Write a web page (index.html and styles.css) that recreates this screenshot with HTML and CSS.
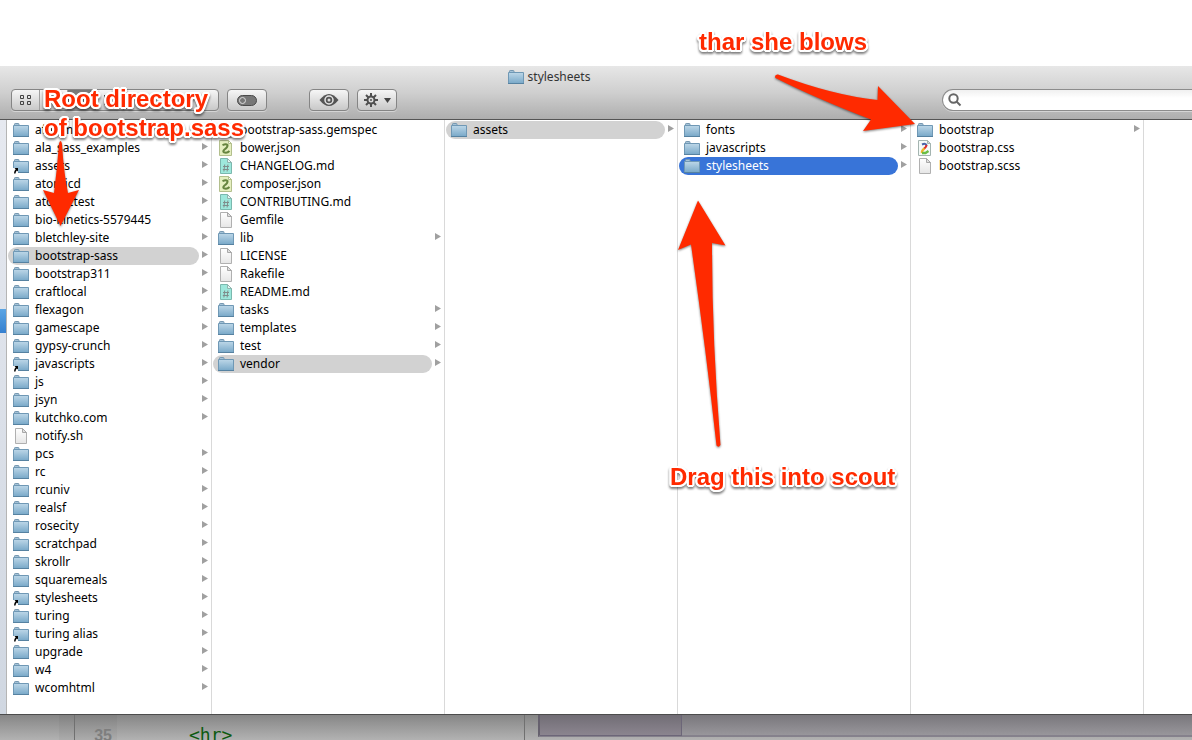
FILE: index.html
```
<!DOCTYPE html>
<html lang="en">
<head>
<meta charset="utf-8">
<title>stylesheets</title>
<link rel="stylesheet" href="styles.css">
</head>
<body>
<svg class="defs" aria-hidden="true">
  <defs>
    <linearGradient id="gFolder" x1="0" y1="0" x2="0" y2="1"><stop offset="0" stop-color="#bdd7e8"/><stop offset="1" stop-color="#78a8c8"/></linearGradient>
    <linearGradient id="gPage" x1="0" y1="0" x2="0" y2="1"><stop offset="0" stop-color="#fff"/><stop offset="1" stop-color="#e6e6e6"/></linearGradient>
    <symbol id="folder" viewBox="0 0 16 16">
      <path d="M1.500 3V2.200Q1.500 1.500 2.200 1.500H5.300Q6 1.500 6 2.200V3.500H1.500Z" fill="#a5c3d8" stroke="#7698b1"/>
      <path d="M.5 3.500H15.500V14.500H.5Z" fill="url(#gFolder)" stroke="#6f98b5"/>
      <path d="M0 14.500H16" stroke="#5682a1"/>
    </symbol>
    <symbol id="alias" viewBox="0 0 16 16">
      <use href="#folder"/>
      <path d="M0 10H5V16H0Z" fill="#fff"/>
      <path d="M1.500 10H5V13.500L3.900 12.400Q2.700 13.400 2.500 15.500H1Q1.100 12.800 2.700 11.200Z" fill="#000"/>
    </symbol>
    <symbol id="page" viewBox="0 0 16 16">
      <path d="M2.500.5H9.500L13.500 4.500V15.500H2.500Z" fill="url(#gPage)" stroke="#b0b0b0"/>
      <path d="M9.500.5V4.500H13.500Z" fill="#e0e0e0" stroke="#a8a8a8"/>
    </symbol>
    <symbol id="md" viewBox="0 0 16 16">
      <path d="M2.500.5H9.500L13.500 4.500V15.500H2.500Z" fill="#9ee8dc" stroke="#7bb8ae"/>
      <path d="M9.500.5V4.500H13.500Z" fill="#e4f6f3" stroke="#8fb5af"/>
      <path d="M6.700 6.500L5.900 13.500M9.900 6.500L9.100 13.500M5 8.500H11M4.800 11.500H10.800" stroke="#7f8d8b" fill="none"/>
    </symbol>
    <symbol id="json" viewBox="0 0 16 16">
      <path d="M1.500.5H10.500L13.500 3.500V15.500H1.500Z" fill="#e5efc0" stroke="#b3bf8d"/>
      <path d="M10.500.5V3.500H13.500Z" fill="#fff" stroke="#b3bf8d"/>
      <path d="M4.500 5.200Q8 3.500 9.500 5Q10 7 6.500 9.500Q4.300 11.500 6 12.300Q9 13.500 11.500 11" fill="none" stroke="#66853f" stroke-width="2"/>
    </symbol>
    <symbol id="css" viewBox="0 0 16 16">
      <path d="M1.500.5H10.500L13.500 3.500V15.500H1.500Z" fill="#f4faf8" stroke="#a4b4b0"/>
      <path d="M10.500.5V3.500H13.500Z" fill="#dcdcdc" stroke="#a4b4b0"/>
      <path d="M5 4.500Q9 2.800 9.500 5.500" fill="none" stroke="#4a63a8" stroke-width="2"/>
      <path d="M9.500 5Q9.500 7 7 8.800" fill="none" stroke="#dc3030" stroke-width="2.200"/>
      <path d="M7.500 8.500Q4.500 10.500 5 13" fill="none" stroke="#efb52c" stroke-width="2.400"/>
      <path d="M5 13H8.500L11.500 11" fill="none" stroke="#6abd45" stroke-width="2.400"/>
    </symbol>
  </defs>
</svg>

<main class="desk">
  <section class="window">
    <header class="toolbar">
      <h1 class="title"><svg class="icon"><use href="#folder"/></svg>stylesheets</h1>
      <div class="tools">
        <div class="segments" role="group" aria-label="View">
          <button class="seg" aria-label="Icons"><svg width="12" height="11" fill="none" stroke="#444"><path d="M.5 .5H3.500V3.500H.5ZM7.500 .5H10.500V3.500H7.500ZM.5 6.500H3.500V9.500H.5ZM7.500 6.500H10.500V9.500H7.500Z"/></svg></button>
          <button class="seg" aria-label="List"><svg width="12" height="10" stroke="#444"><path d="M0 1.500H12M0 4.500H12M0 7.500H12"/></svg></button>
          <button class="seg active" aria-label="Columns"><svg width="12" height="10" stroke="#fff"><path d="M1.500 0V10M5.500 0V10M9.500 0V10"/></svg></button>
          <button class="seg" aria-label="Cover Flow"><svg width="14" height="10" stroke="#444"><path d="M1.500 0V10M3.500 0V10M10.500 0V10M12.500 0V10"/></svg></button>
          <button class="seg wide" aria-label="Arrange"></button>
        </div>
        <button class="tool" aria-label="Toggle"><svg width="20" height="11"><rect x=".5" y=".5" width="19" height="10" rx="5" fill="#777" stroke="#4b4b4b"/><circle cx="5.500" cy="5.500" r="3" fill="#777" stroke="#ddd"/></svg></button>
        <button class="tool look" aria-label="Quick Look"><svg width="20" height="14"><path d="M.5 7Q10-5 19.500 7Q10 19 .5 7Z" fill="#555"/><circle cx="10" cy="7" r="4" fill="#555" stroke="#e5e5e5" stroke-width="1.500"/><circle cx="10" cy="7" r="1.500" fill="#ddd"/></svg></button>
        <button class="tool" aria-label="Actions"><svg width="28" height="16"><path d="M8 1V15M1 8H15M3 3L13 13M13 3L3 13" stroke="#505050" stroke-width="2"/><circle cx="8" cy="8" r="3.500" fill="#ddd" stroke="#505050" stroke-width="2"/><circle cx="8" cy="8" r="1" fill="#505050"/><path d="M21 6H28L24.500 11Z" fill="#444"/></svg></button>
        <label class="search"><svg width="14" height="14" fill="none" stroke="#666" stroke-width="2"><circle cx="5.500" cy="5.500" r="4.200"/><path d="M8.500 8.500L12.500 12.500"/></svg><input type="search" aria-label="Search"></label>
      </div>
    </header>
    <div class="browser">
      <div class="sidebar"><div class="place"></div></div>
      <ul class="column">
        <li class="dir"><a href="#"><svg class="icon"><use href="#folder"/></svg>afterm</a></li>
        <li class="dir"><a href="#"><svg class="icon"><use href="#folder"/></svg>ala_sass_examples</a></li>
        <li class="dir"><a href="#"><svg class="icon"><use href="#alias"/></svg>assets</a></li>
        <li class="dir"><a href="#"><svg class="icon"><use href="#folder"/></svg>atomicd</a></li>
        <li class="dir"><a href="#"><svg class="icon"><use href="#folder"/></svg>atomictest</a></li>
        <li class="dir"><a href="#"><svg class="icon"><use href="#folder"/></svg>bio-kinetics-5579445</a></li>
        <li class="dir"><a href="#"><svg class="icon"><use href="#folder"/></svg>bletchley-site</a></li>
        <li class="dir"><a class="open" href="#"><svg class="icon"><use href="#folder"/></svg>bootstrap-sass</a></li>
        <li class="dir"><a href="#"><svg class="icon"><use href="#folder"/></svg>bootstrap311</a></li>
        <li class="dir"><a href="#"><svg class="icon"><use href="#folder"/></svg>craftlocal</a></li>
        <li class="dir"><a href="#"><svg class="icon"><use href="#folder"/></svg>flexagon</a></li>
        <li class="dir"><a href="#"><svg class="icon"><use href="#folder"/></svg>gamescape</a></li>
        <li class="dir"><a href="#"><svg class="icon"><use href="#folder"/></svg>gypsy-crunch</a></li>
        <li class="dir"><a href="#"><svg class="icon"><use href="#alias"/></svg>javascripts</a></li>
        <li class="dir"><a href="#"><svg class="icon"><use href="#folder"/></svg>js</a></li>
        <li class="dir"><a href="#"><svg class="icon"><use href="#folder"/></svg>jsyn</a></li>
        <li class="dir"><a href="#"><svg class="icon"><use href="#folder"/></svg>kutchko.com</a></li>
        <li><a href="#"><svg class="icon"><use href="#page"/></svg>notify.sh</a></li>
        <li class="dir"><a href="#"><svg class="icon"><use href="#folder"/></svg>pcs</a></li>
        <li class="dir"><a href="#"><svg class="icon"><use href="#folder"/></svg>rc</a></li>
        <li class="dir"><a href="#"><svg class="icon"><use href="#folder"/></svg>rcuniv</a></li>
        <li class="dir"><a href="#"><svg class="icon"><use href="#folder"/></svg>realsf</a></li>
        <li class="dir"><a href="#"><svg class="icon"><use href="#folder"/></svg>rosecity</a></li>
        <li class="dir"><a href="#"><svg class="icon"><use href="#folder"/></svg>scratchpad</a></li>
        <li class="dir"><a href="#"><svg class="icon"><use href="#folder"/></svg>skrollr</a></li>
        <li class="dir"><a href="#"><svg class="icon"><use href="#folder"/></svg>squaremeals</a></li>
        <li class="dir"><a href="#"><svg class="icon"><use href="#alias"/></svg>stylesheets</a></li>
        <li class="dir"><a href="#"><svg class="icon"><use href="#folder"/></svg>turing</a></li>
        <li class="dir"><a href="#"><svg class="icon"><use href="#alias"/></svg>turing alias</a></li>
        <li class="dir"><a href="#"><svg class="icon"><use href="#folder"/></svg>upgrade</a></li>
        <li class="dir"><a href="#"><svg class="icon"><use href="#folder"/></svg>w4</a></li>
        <li class="dir"><a href="#"><svg class="icon"><use href="#folder"/></svg>wcomhtml</a></li>
      </ul>
      <ul class="column">
        <li><a href="#"><svg class="icon"><use href="#page"/></svg>bootstrap-sass.gemspec</a></li>
        <li><a href="#"><svg class="icon"><use href="#json"/></svg>bower.json</a></li>
        <li><a href="#"><svg class="icon"><use href="#md"/></svg>CHANGELOG.md</a></li>
        <li><a href="#"><svg class="icon"><use href="#json"/></svg>composer.json</a></li>
        <li><a href="#"><svg class="icon"><use href="#md"/></svg>CONTRIBUTING.md</a></li>
        <li><a href="#"><svg class="icon"><use href="#page"/></svg>Gemfile</a></li>
        <li class="dir"><a href="#"><svg class="icon"><use href="#folder"/></svg>lib</a></li>
        <li><a href="#"><svg class="icon"><use href="#page"/></svg>LICENSE</a></li>
        <li><a href="#"><svg class="icon"><use href="#page"/></svg>Rakefile</a></li>
        <li><a href="#"><svg class="icon"><use href="#md"/></svg>README.md</a></li>
        <li class="dir"><a href="#"><svg class="icon"><use href="#folder"/></svg>tasks</a></li>
        <li class="dir"><a href="#"><svg class="icon"><use href="#folder"/></svg>templates</a></li>
        <li class="dir"><a href="#"><svg class="icon"><use href="#folder"/></svg>test</a></li>
        <li class="dir"><a class="open" href="#"><svg class="icon"><use href="#folder"/></svg>vendor</a></li>
      </ul>
      <ul class="column">
        <li class="dir"><a class="open" href="#"><svg class="icon"><use href="#folder"/></svg>assets</a></li>
      </ul>
      <ul class="column">
        <li class="dir"><a href="#"><svg class="icon"><use href="#folder"/></svg>fonts</a></li>
        <li class="dir"><a href="#"><svg class="icon"><use href="#folder"/></svg>javascripts</a></li>
        <li class="dir"><a class="selected" href="#"><svg class="icon"><use href="#folder"/></svg>stylesheets</a></li>
      </ul>
      <ul class="column">
        <li class="dir"><a href="#"><svg class="icon"><use href="#folder"/></svg>bootstrap</a></li>
        <li><a href="#"><svg class="icon"><use href="#css"/></svg>bootstrap.css</a></li>
        <li><a href="#"><svg class="icon"><use href="#page"/></svg>bootstrap.scss</a></li>
      </ul>
    </div>
  </section>

  <section class="editor">
    <div class="tree"></div>
    <div class="margin"></div>
    <div class="gutter">35</div>
    <div class="code">&lt;hr&gt;</div>
    <div class="divider"></div>
    <div class="panel"><div class="tab"></div></div>
  </section>

  <svg class="arrows" width="1192" height="740" viewBox="0 0 1192 740" fill="#ff2a00" aria-hidden="true">
    <path d="M775 77Q775 74 778 74.500Q832 95 877.500 100L878 86L915 124L863 131L871 119.500Q815 98 775.500 78Z"/>
    <path d="M698 200.500L725.500 245.500L712 243Q712 340 720.500 445Q718.500 448 716.500 445.500Q706 350 691 244.500L678 250Z"/>
    <path d="M60.500 141Q61.500 141 62 144Q64 175 68 193L79 190L60.500 226L43 190L54 193Q57 170 59 144Q59.500 141 60.500 141Z"/>
  </svg>
  <p class="note root">Root directory<br>of bootstrap.sass</p>
  <p class="note thar">thar she blows</p>
  <p class="note drag">Drag this into scout</p>
</main>
</body>
</html>
```

FILE: styles.css
```
* { box-sizing: border-box; }
body {
  margin: 0;
  background: #fff;
  color: #000;
  font: 12px/18px "Noto Sans", "Open Sans", sans-serif;
}
.defs { position: absolute; width: 0; height: 0; }
.desk { position: relative; padding-top: 66px; overflow: hidden; }
.icon { width: 16px; height: 16px; flex: none; }
button { font: inherit; margin: 0; padding: 0; cursor: default; }

/* Toolbar */
.toolbar {
  background: linear-gradient(#e7e7e7, #cfcfcf 50%, #aeaeae);
  border-bottom: 1px solid #555;
  padding-bottom: 8px;
}
.title {
  display: flex;
  justify-content: center;
  align-items: center;
  gap: 4px;
  margin: 0;
  padding: 2px 94px 3px 0;
  font-size: 12px;
  font-weight: 400;
  color: #333;
}
.tools { display: flex; padding-left: 11px; }
.segments, .tool {
  display: flex;
  height: 22px;
  border: 1px solid #858585;
  border-radius: 4px;
  background: linear-gradient(#f6f6f6, #c8c8c8);
  box-shadow: 0 1px 0 #d5d5d5;
}
.segments { width: 208px; overflow: hidden; }
.seg {
  width: 28px;
  display: flex;
  align-items: center;
  justify-content: center;
  background: none;
  border: 0;
  border-right: 1px solid #a0a0a0;
}
.seg.active { background: linear-gradient(#777, #999); }
.seg.wide { flex: 1; border-right: 0; }
.tool { width: 40px; margin-left: 8px; align-items: center; justify-content: center; }
.tool.look { margin-left: 42px; }
.search {
  flex: 1;
  display: flex;
  align-items: center;
  height: 22px;
  margin-left: 545px;
  padding-left: 5px;
  border: 1px solid #8c8c8c;
  border-right: 0;
  border-radius: 11px 0 0 11px;
  background: linear-gradient(#f0f0f0, #fff 40%);
  box-shadow: 0 1px 0 #d5d5d5;
}
.search input {
  flex: 1;
  min-width: 0;
  border: 0;
  background: none;
  font: inherit;
  outline: 0;
}

/* Columns */
.browser {
  display: grid;
  grid-template-columns: 7px 205fr repeat(4, 233fr) 48fr;
  background: #fff;
}
.sidebar {
  padding-top: 189px;
  background: linear-gradient(#e6e9f0, #d0d7e1);
  border-right: 1px solid #b5b5b5;
}
.place { height: 24px; background: linear-gradient(#5ba5e4, #3580d0); }
.column {
  margin: 0;
  padding: 1px 0 17px 1px;
  list-style: none;
  border-right: 1px solid #d9d9d9;
}
.column li { display: flex; align-items: center; padding-right: 12px; height: 18px; }
.column li.dir { padding-right: 3px; }
.column li.dir::after {
  content: "";
  width: 6px;
  height: 7px;
  margin: 0 0 3px 3px;
  background: #a0a0a0;
  clip-path: polygon(0 0, 100% 50%, 0 100%);
}
.column a {
  flex: 1;
  display: flex;
  align-items: center;
  gap: 6px;
  height: 18px;
  padding-left: 5px;
  border-radius: 9px;
  color: #000;
  text-decoration: none;
  white-space: nowrap;
}
.column a.open { background: #d2d2d2; }
.column a.selected { background: #3874d8; color: #fff; }

/* Editor behind the window */
.editor {
  display: flex;
  height: 26px;
  overflow: hidden;
  border-top: 1px solid #4c4c4c;
  background: linear-gradient(#868686, #b2b2b2);
}
.tree { width: 59px; }
.margin { width: 16px; background: rgba(0, 0, 0, .03); border-right: 1px solid #707070; }
.gutter {
  width: 42px;
  padding: 12px 5px 0 0;
  background: rgba(0, 0, 0, .03);
  color: #7e7e7e;
  font: bold 16px/18px "Liberation Sans", sans-serif;
  text-align: right;
}
.code {
  width: 408px;
  padding: 9px 0 0 72px;
  border-right: 1px solid #707070;
  color: #0d5a10;
  font: 18px/22px "DejaVu Sans Mono", monospace;
}
.divider { width: 13px; }
.panel {
  flex: 1;
  height: 22px;
  border-left: 2px solid #66616e;
  border-bottom: 2px solid #85818c;
  background: linear-gradient(#79777c, #98969b);
}
.tab {
  width: 142px;
  height: 21px;
  background: linear-gradient(#716d75, #8b858f);
  border: solid #6c6678;
  border-width: 0 1px 1px 0;
}

/* Annotations */
.arrows { position: absolute; top: 0; left: 0; filter: drop-shadow(0 1px 1px rgba(0, 0, 0, .5)); }
.note {
  position: absolute;
  margin: 0;
  color: #ff2a00;
  font: bold 24px/29px "Liberation Sans", sans-serif;
  white-space: nowrap;
  text-shadow:
    2px 0 #fff, -2px 0 #fff, 0 2px #fff, 0 -2px #fff,
    1px 2px #fff, -1px 2px #fff, 1px -2px #fff, -1px -2px #fff,
    2px 1px #fff, -2px 1px #fff, 2px -1px #fff, -2px -1px #fff;
  filter: drop-shadow(0 2px 1px rgba(0, 0, 0, .5));
}
.root { left: 44px; top: 84px; }
.thar { left: 699px; top: 27px; }
.drag { left: 670px; top: 462px; }
```
